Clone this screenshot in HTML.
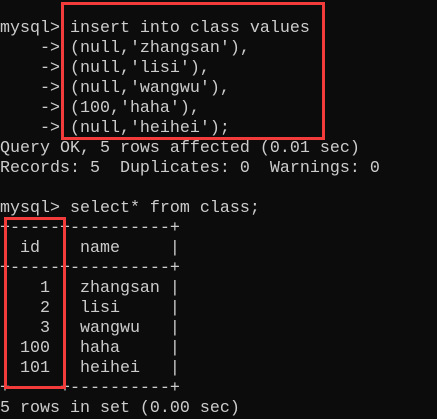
<!DOCTYPE html><html><head><style>
html,body{margin:0;padding:0;background:#0c0c0c;width:437px;height:414px;overflow:hidden}
pre{position:absolute;left:0;top:19px;margin:0;font-family:"Liberation Mono",monospace;font-size:16.67px;line-height:20px;color:#cccccc}
.b{position:absolute;border:3px solid #f23b3b;box-sizing:border-box}
</style></head><body>
<pre>mysql&gt; insert into class values
    -&gt; (null,'zhangsan'),
    -&gt; (null,'lisi'),
    -&gt; (null,'wangwu'),
    -&gt; (100,'haha'),
    -&gt; (null,'heihei');
Query OK, 5 rows affected (0.01 sec)
Records: 5  Duplicates: 0  Warnings: 0

mysql&gt; select* from class;
+-----+----------+
| id  | name     |
+-----+----------+
|   1 | zhangsan |
|   2 | lisi     |
|   3 | wangwu   |
| 100 | haha     |
| 101 | heihei   |
+-----+----------+
5 rows in set (0.00 sec)</pre>
<div class="b" style="left:61px;top:2px;width:264px;height:138px"></div>
<div class="b" style="left:4px;top:217px;width:62px;height:172px"></div>
</body></html>
